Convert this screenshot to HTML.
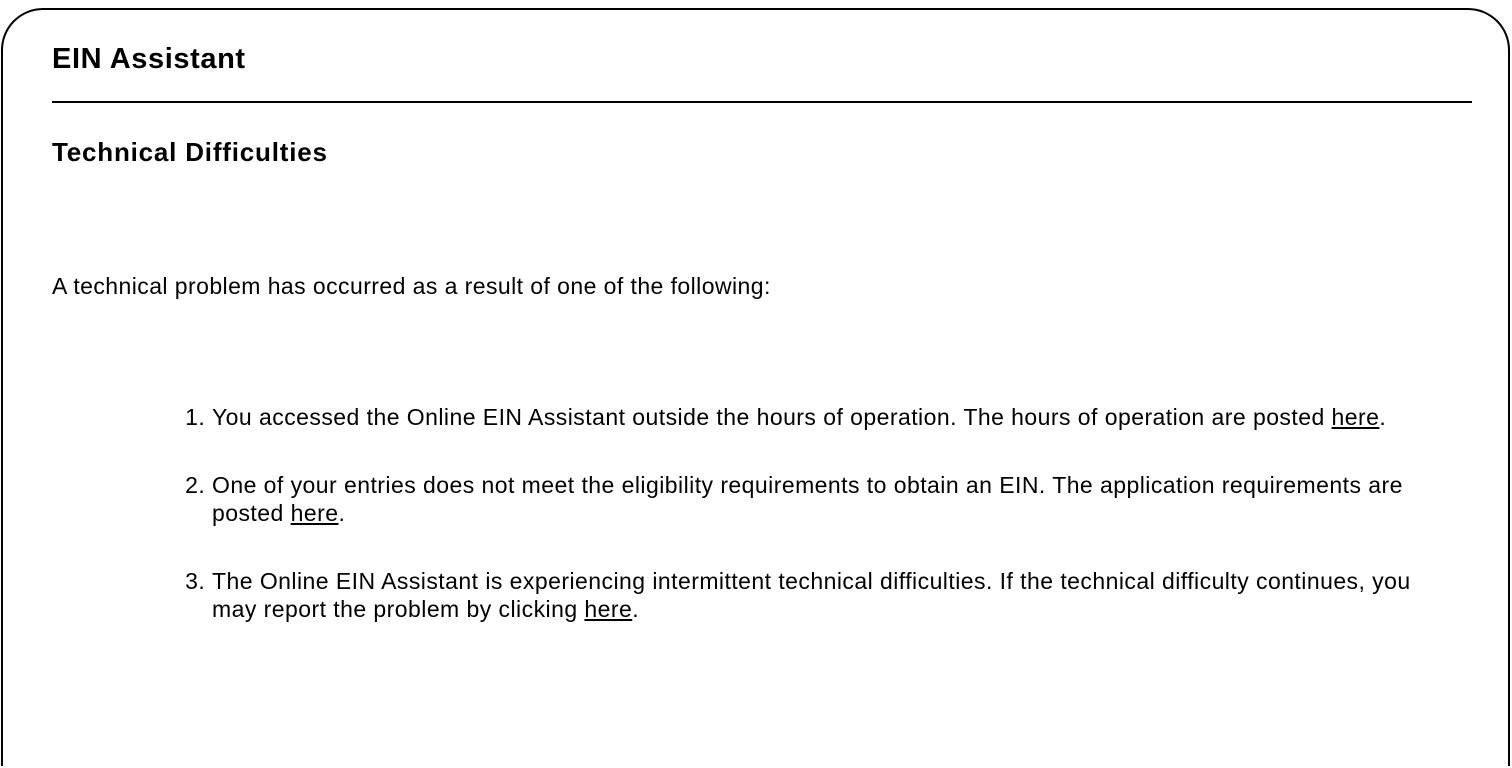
<!DOCTYPE html>
<html><head><style>
html,body{margin:0;padding:0;background:#fff;width:1512px;height:768px;overflow:hidden}
body{font-family:"Liberation Sans",Arial,sans-serif;color:#000;position:relative}
.box{position:absolute;left:1px;top:8px;width:1505px;height:756px;border:2px solid #000;border-bottom:none;border-radius:42px 42px 0 0}
h1{position:absolute;left:52px;top:43px;margin:0;font-size:29px;font-weight:bold;letter-spacing:0.6px}
.hr{position:absolute;left:52px;top:101px;width:1420px;height:2px;background:#000}
h2{position:absolute;left:52px;top:137px;margin:0;font-size:26px;font-weight:bold;letter-spacing:0.8px}
p{position:absolute;left:52px;top:273px;margin:0;font-size:23px;letter-spacing:0.43px}
ol{position:absolute;left:212px;top:403px;margin:0;padding:0;width:1205px;font-size:23px;line-height:28px;letter-spacing:0.45px}
li{margin-bottom:40px}
a{color:#000;text-decoration:underline}
</style></head><body>
<div class="box"></div>
<h1>EIN Assistant</h1>
<div class="hr"></div>
<h2>Technical Difficulties</h2>
<p>A technical problem has occurred as a result of one of the following:</p>
<ol>
<li>You accessed the Online EIN Assistant outside the hours of operation. The hours of operation are posted <a>here</a>.</li>
<li>One of your entries does not meet the eligibility requirements to obtain an EIN. The application requirements are posted <a>here</a>.</li>
<li>The Online EIN Assistant is experiencing intermittent technical difficulties. If the technical difficulty continues, you may report the problem by clicking <a>here</a>.</li>
</ol>
</body></html>
